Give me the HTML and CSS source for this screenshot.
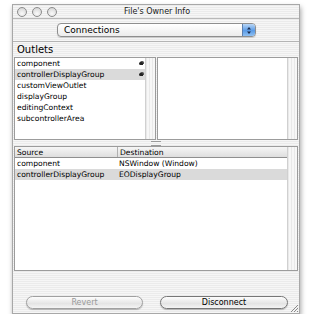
FILE: index.html
```html
<!DOCTYPE html>
<html lang="en">
<head>
  <meta charset="UTF-8">
  <title>File's Owner Info</title>
  <link rel="stylesheet" href="styles.css">
</head>
<body>
  <div class="window">
    <div class="titlebar">
      <div class="lights"><span></span><span></span><span></span></div>
      <div class="title">File's Owner Info</div>
    </div>

    <div class="toolbar">
      <div class="popup">
        <span class="popup-label">Connections</span>
        <span class="popup-arrows">
          <svg width="8" height="9" viewBox="0 0 8 9">
            <path d="M2 3.5 L4 1 L6 3.5 Z M2 5.5 L4 8 L6 5.5 Z" fill="#1b2a4a"/>
          </svg>
        </span>
      </div>
    </div>

    <div class="section-label">Outlets</div>

    <div class="split">
      <div class="top-pane">
        <div class="box outlets">
          <ul class="list">
            <li>component <span class="dot"></span></li>
            <li class="selected">controllerDisplayGroup <span class="dot"></span></li>
            <li>customViewOutlet</li>
            <li>displayGroup</li>
            <li>editingContext</li>
            <li>subcontrollerArea</li>
          </ul>
          <div class="scroller"></div>
        </div>
        <div class="box targets">
          <div class="blank"></div>
          <div class="scroller"></div>
        </div>
      </div>

      <div class="divider"><span class="dimple"></span></div>

      <div class="box connections">
        <div class="table">
          <div class="row head">
            <div class="cell src">Source</div>
            <div class="cell dst">Destination</div>
          </div>
          <div class="row">
            <div class="cell src">component</div>
            <div class="cell dst">NSWindow (Window)</div>
          </div>
          <div class="row selected">
            <div class="cell src">controllerDisplayGroup</div>
            <div class="cell dst">EODisplayGroup</div>
          </div>
        </div>
        <div class="scroller"></div>
      </div>
    </div>

    <div class="buttons">
      <button class="btn revert" disabled>Revert</button>
      <button class="btn disconnect">Disconnect</button>
      <span class="grip">
        <svg width="8" height="8" viewBox="0 0 8 8">
          <path d="M1 8 L8 1 M4 8 L8 4 M7 8 L8 7" stroke="#8a8a8a" stroke-width="1"/>
        </svg>
      </span>
    </div>
  </div>
</body>
</html>
```

FILE: styles.css
```css
body {
  margin: 0;
  background: #fff;
  font-family: "DejaVu Sans", "Liberation Sans", sans-serif;
  font-size: 7.6px;
  color: #000;
}

.window {
  position: relative;
  margin: 4px 0 0 12px;
  width: 288px;
  height: 310px;
  box-sizing: border-box;
  display: flex;
  flex-direction: column;
  border: 1px solid #a8a8a8;
  background: repeating-linear-gradient(#ebebeb 0 1px, #f6f6f6 1px 2px);
  box-shadow: 1px 3px 5px rgba(0, 0, 0, 0.35);
}

.titlebar {
  height: 13px;
  display: flex;
  align-items: center;
  border-bottom: 1px solid #b8b8b8;
}
.lights {
  display: flex;
  gap: 5px;
  padding-left: 4px;
}
.lights span {
  width: 8px;
  height: 8px;
  border-radius: 50%;
  border: 1px solid #8c8c8c;
  background: radial-gradient(circle at 50% 70%, #fafafa, #cfcfcf);
}
.title {
  flex: 1;
  text-align: center;
  font-size: 8px;
  color: #222;
  padding-right: 42px;
}

.toolbar {
  height: 22px;
  display: flex;
  align-items: center;
  padding-left: 44px;
  border-bottom: 1px solid #b4b4b4;
}
.popup {
  width: 197px;
  height: 12px;
  display: flex;
  align-items: center;
  border: 1px solid #8e8e8e;
  border-radius: 4px;
  background: linear-gradient(#fff, #ececec);
  box-shadow: 0 1px 1px rgba(0, 0, 0, 0.15);
}
.popup-label {
  flex: 1;
  padding-left: 6px;
  font-size: 9px;
}
.popup-arrows {
  width: 12px;
  height: 12px;
  display: flex;
  align-items: center;
  justify-content: center;
  border-radius: 0 3px 3px 0;
  background: linear-gradient(#b9d6f6, #5a9be6 55%, #8fc0f2);
  border-left: 1px solid #5c7fae;
}

.section-label {
  height: 15px;
  padding-left: 4px;
  font-size: 10px;
  line-height: 15px;
}

.split {
  flex: 1;
  display: flex;
  flex-direction: column;
  padding: 0 1px;
}
.top-pane {
  height: 83px;
  display: flex;
  gap: 1px;
}
.box {
  display: flex;
  border: 1px solid #9c9c9c;
  background: #fff;
}
.outlets { flex: 1; }
.targets { flex: 1; }

.list {
  flex: 1;
  list-style: none;
  margin: 0;
  padding: 0;
}
.list li {
  height: 11px;
  line-height: 11px;
  padding-left: 2px;
  display: flex;
  align-items: center;
}
.list .dot {
  margin-left: auto;
  margin-right: 2px;
  width: 4px;
  height: 3px;
  border-radius: 2px 2px 0 2px;
  background: #222;
  box-shadow: 1px -1px 0 #555;
}
.selected { background: #dadada; }

.blank { flex: 1; }

.scroller {
  width: 9px;
  border-left: 1px solid #d0d0d0;
  background: repeating-linear-gradient(90deg, #e9e9e9 0 1px, #f7f7f7 1px 3px);
}

.divider {
  height: 6px;
  display: flex;
  justify-content: center;
  align-items: center;
}
.dimple {
  width: 10px;
  height: 3px;
  border-top: 1px solid #9a9a9a;
  border-bottom: 1px solid #9a9a9a;
}

.connections {
  height: 125px;
  box-sizing: border-box;
}
.table {
  flex: 1;
}
.row {
  display: flex;
  height: 11px;
  line-height: 11px;
}
.row.head {
  background: linear-gradient(#f6f6f6, #dedede);
  border-bottom: 1px solid #8f8f8f;
  height: 10px;
}
.cell {
  padding-left: 2px;
  white-space: nowrap;
  overflow: hidden;
}
.src { width: 100px; }
.head .src { border-right: 1px solid #b0b0b0; }
.dst { flex: 1; }

.buttons {
  position: relative;
  flex: 1;
  display: flex;
  align-items: flex-end;
  gap: 17px;
  padding: 0 0 4px 13px;
}
.btn {
  height: 13px;
  padding: 0;
  font-family: inherit;
  font-size: 8px;
  border: 1px solid #777;
  border-radius: 7px;
  background: linear-gradient(#fdfdfd, #e4e4e4 60%, #f4f4f4);
  box-shadow: 0 1px 1px rgba(0, 0, 0, 0.25);
  color: #000;
}
.revert {
  width: 117px;
  color: #9a9a9a;
  border-color: #a0a0a0;
}
.disconnect { width: 128px; }

.grip {
  position: absolute;
  right: 1px;
  bottom: 1px;
  display: flex;
}
```
